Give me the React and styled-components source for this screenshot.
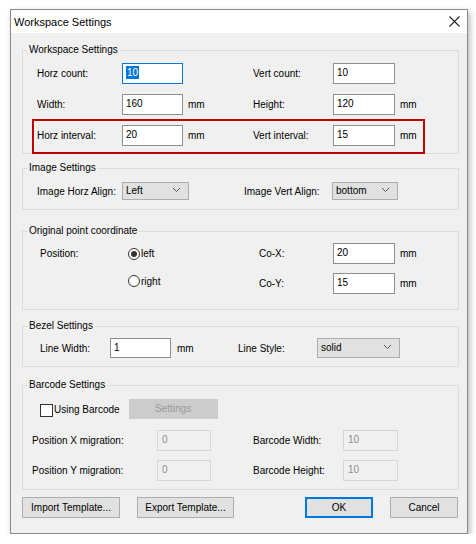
import React from 'react';
import styled, { createGlobalStyle } from 'styled-components';

const GlobalStyle = createGlobalStyle`
    body {
        margin: 0;
        background: #ffffff;
        font-family: 'Liberation Sans', Arial, sans-serif;
    }
`

const Window = styled.div`
    margin: 9px 0 0 10px;
    width: 458px;
    box-sizing: border-box;
    border: 1px solid #8a8a8a;
    background: #f0f0f0;
    box-shadow: 2px 3px 6px rgba(0, 0, 0, 0.28);
    display: flex;
    flex-direction: column;
`

const TitleBar = styled.div`
    height: 23px;
    background: #ffffff;
    display: flex;
    align-items: center;
    justify-content: space-between;
    padding: 0 7px 0 3px;
    font-size: 11px;
    color: #000;
    svg {
        display: block;
    }
`

const Body = styled.div`
    display: flex;
    flex-direction: column;
    padding: 11px 8px 15px 11px;
`

const Group = styled.fieldset`
    margin: ${p => p.$top || 0}px 0 0 0;
    padding: 0 4px;
    min-width: 0;
    border: 1px solid #dcdcdc;
    legend {
        font-size: 10px;
        line-height: 12px;
        padding: 0 2px;
        color: #000;
    }
`

const GroupBody = styled.div`
    display: flex;
    flex-direction: column;
    gap: ${p => p.$gap || 10}px;
    padding: ${p => p.$pt}px 0 ${p => p.$pb}px ${p => p.$pl}px;
`

const Row = styled.div`
    position: relative;
    display: grid;
    grid-template-columns: ${p => p.$cols};
    align-items: center;
    height: ${p => p.$h || 21}px;
    margin-top: ${p => p.$mt || 0}px;
    font-size: 10px;
    color: #000;
    &::after {
        content: '';
        display: ${p => (p.$highlight ? 'block' : 'none')};
        position: absolute;
        left: -5px;
        top: -6px;
        width: 393px;
        height: 35px;
        box-sizing: border-box;
        border: 2px solid #c00000;
        pointer-events: none;
    }
`

const Label = styled.span`
    white-space: nowrap;
`

const Unit = styled.span`
    padding-left: ${p => p.$pad || 5}px;
`

const TextBox = styled.div`
    box-sizing: border-box;
    height: ${p => p.$h || 21}px;
    display: flex;
    align-items: center;
    padding: 0 ${p => (p.$disabled ? 4 : 3)}px 2px;
    font-size: 10px;
    background: ${p => (p.$disabled ? '#f0f0f0' : '#ffffff')};
    color: ${p => (p.$disabled ? '#8d8d8d' : '#000')};
    border: 1px solid ${p => (p.$focus ? '#0078d7' : p.$disabled ? '#d6d6d6' : '#8f8f8f')};
`

const Selected = styled.span`
    background: #0078d7;
    color: #fff;
    padding: 0 1px;
    line-height: 13px;
`

const Select = styled.div`
    box-sizing: border-box;
    height: ${p => p.$h || 18}px;
    display: flex;
    align-items: center;
    justify-content: space-between;
    padding: 0 7px 2px 3px;
    font-size: 10px;
    background: #e1e1e1;
    border: 1px solid #adadad;
    color: #000;
`

const RadioOption = styled.label`
    display: flex;
    align-items: center;
    margin-top: ${p => p.$shift || 0}px;
    font-size: 10px;
`

const RadioDot = styled.span`
    width: 12px;
    height: 12px;
    box-sizing: border-box;
    border-radius: 50%;
    border: 1px solid #333;
    background: #fff;
    display: flex;
    align-items: center;
    justify-content: center;
    margin-right: 1px;
    &::before {
        content: '';
        display: ${p => (p.$on ? 'block' : 'none')};
        width: 6px;
        height: 6px;
        border-radius: 50%;
        background: #333;
    }
`

const CheckRow = styled.div`
    display: flex;
    align-items: center;
    height: 20px;
    margin-left: 8px;
    font-size: 10px;
`

const CheckBox = styled.span`
    width: 13px;
    height: 13px;
    box-sizing: border-box;
    border: 1px solid #333;
    background: #fff;
    margin: 2px 1px 0 0;
`

const Button = styled.div`
    box-sizing: border-box;
    width: ${p => p.$w}px;
    height: ${p => p.$h || 21}px;
    display: flex;
    align-items: center;
    justify-content: center;
    font-size: 10px;
    padding-bottom: 1px;
    color: ${p => (p.$disabled ? '#9a9a9a' : '#000')};
    background: ${p => (p.$disabled ? '#cccccc' : '#e1e1e1')};
    border: ${p => (p.$primary ? '2px solid #0078d7' : p.$disabled ? '1px solid #cccccc' : '1px solid #adadad')};
    margin-left: ${p => p.$ml || 0}px;
`

const ButtonBar = styled.div`
    display: flex;
    align-items: center;
    margin-top: 7px;
    padding-right: 1px;
`

const ButtonGroup = styled.div`
    display: flex;
    gap: 17px;
    margin-left: ${p => (p.$right ? 'auto' : 0)};
`

const Chevron = () => (
    <svg width="9" height="6" viewBox="0 0 9 6">
        <path d="M1 1 L4.5 4.5 L8 1" fill="none" stroke="#555" strokeWidth="1" />
    </svg>
)

const CloseIcon = () => (
    <svg width="11" height="11" viewBox="0 0 11 11">
        <path d="M0.5 0.5 L10.5 10.5 M10.5 0.5 L0.5 10.5" stroke="#222" strokeWidth="1.1" />
    </svg>
)

const wsCols = '85px 61px 70px 80px 62px auto'
const imgCols = '85px 67px 55px 88px 66px'
const bezelCols = '70px 61px 67px 79px 83px'
const barCols = '125px 54px 42px 90px 55px'

export default function App() {
    return (
        <>
            <GlobalStyle />
            <Window>
                <TitleBar>
                    <span>Workspace Settings</span>
                    <CloseIcon />
                </TitleBar>
                <Body>
                    <Group>
                        <legend>Workspace Settings</legend>
                        <GroupBody $pt={7} $pb={7} $pl={10}>
                            <Row $cols={wsCols}>
                                <Label>Horz count:</Label>
                                <TextBox $focus><Selected>10</Selected></TextBox>
                                <span />
                                <Label>Vert count:</Label>
                                <TextBox>10</TextBox>
                            </Row>
                            <Row $cols={wsCols}>
                                <Label>Width:</Label>
                                <TextBox>160</TextBox>
                                <Unit>mm</Unit>
                                <Label>Height:</Label>
                                <TextBox>120</TextBox>
                                <Unit>mm</Unit>
                            </Row>
                            <Row $cols={wsCols} $highlight>
                                <Label>Horz interval:</Label>
                                <TextBox>20</TextBox>
                                <Unit>mm</Unit>
                                <Label>Vert interval:</Label>
                                <TextBox>15</TextBox>
                                <Unit>mm</Unit>
                            </Row>
                        </GroupBody>
                    </Group>

                    <Group $top={8}>
                        <legend>Image Settings</legend>
                        <GroupBody $pt={8} $pb={9} $pl={10}>
                            <Row $cols={imgCols} $h={18}>
                                <Label>Image Horz Align:</Label>
                                <Select>Left<Chevron /></Select>
                                <span />
                                <Label>Image Vert Align:</Label>
                                <Select>bottom<Chevron /></Select>
                            </Row>
                        </GroupBody>
                    </Group>

                    <Group $top={15}>
                        <legend>Original point coordinate</legend>
                        <GroupBody $pt={6} $pb={15} $pl={13} $gap={9}>
                            <Row $cols="88px 131px 74px 62px auto">
                                <Label>Position:</Label>
                                <RadioOption><RadioDot $on />left</RadioOption>
                                <Label>Co-X:</Label>
                                <TextBox>20</TextBox>
                                <Unit>mm</Unit>
                            </Row>
                            <Row $cols="88px 131px 74px 62px auto">
                                <span />
                                <RadioOption $shift={-5}><RadioDot />right</RadioOption>
                                <Label>Co-Y:</Label>
                                <TextBox>15</TextBox>
                                <Unit>mm</Unit>
                            </Row>
                        </GroupBody>
                    </Group>

                    <Group $top={10}>
                        <legend>Bezel Settings</legend>
                        <GroupBody $pt={6} $pb={8} $pl={13}>
                            <Row $cols={bezelCols} $h={20}>
                                <Label>Line Width:</Label>
                                <TextBox $h={20}>1</TextBox>
                                <Unit $pad={6}>mm</Unit>
                                <Label>Line Style:</Label>
                                <Select $h={20}>solid<Chevron /></Select>
                            </Row>
                        </GroupBody>
                    </Group>

                    <Group $top={12}>
                        <legend>Barcode Settings</legend>
                        <GroupBody $pt={8} $pb={8} $pl={5} $gap={9}>
                            <CheckRow>
                                <CheckBox />
                                <Label>Using Barcode</Label>
                                <Button $w={89} $h={20} $ml={9} $disabled>Settings</Button>
                            </CheckRow>
                            <Row $cols={barCols} $mt={2}>
                                <Label>Position X migration:</Label>
                                <TextBox $disabled>0</TextBox>
                                <span />
                                <Label>Barcode Width:</Label>
                                <TextBox $disabled>10</TextBox>
                            </Row>
                            <Row $cols={barCols}>
                                <Label>Position Y migration:</Label>
                                <TextBox $disabled>0</TextBox>
                                <span />
                                <Label>Barcode Height:</Label>
                                <TextBox $disabled>10</TextBox>
                            </Row>
                        </GroupBody>
                    </Group>

                    <ButtonBar>
                        <ButtonGroup>
                            <Button $w={98}>Import Template...</Button>
                            <Button $w={97}>Export Template...</Button>
                        </ButtonGroup>
                        <ButtonGroup $right>
                            <Button $w={68} $primary>OK</Button>
                            <Button $w={68}>Cancel</Button>
                        </ButtonGroup>
                    </ButtonBar>
                </Body>
            </Window>
        </>
    )
}
